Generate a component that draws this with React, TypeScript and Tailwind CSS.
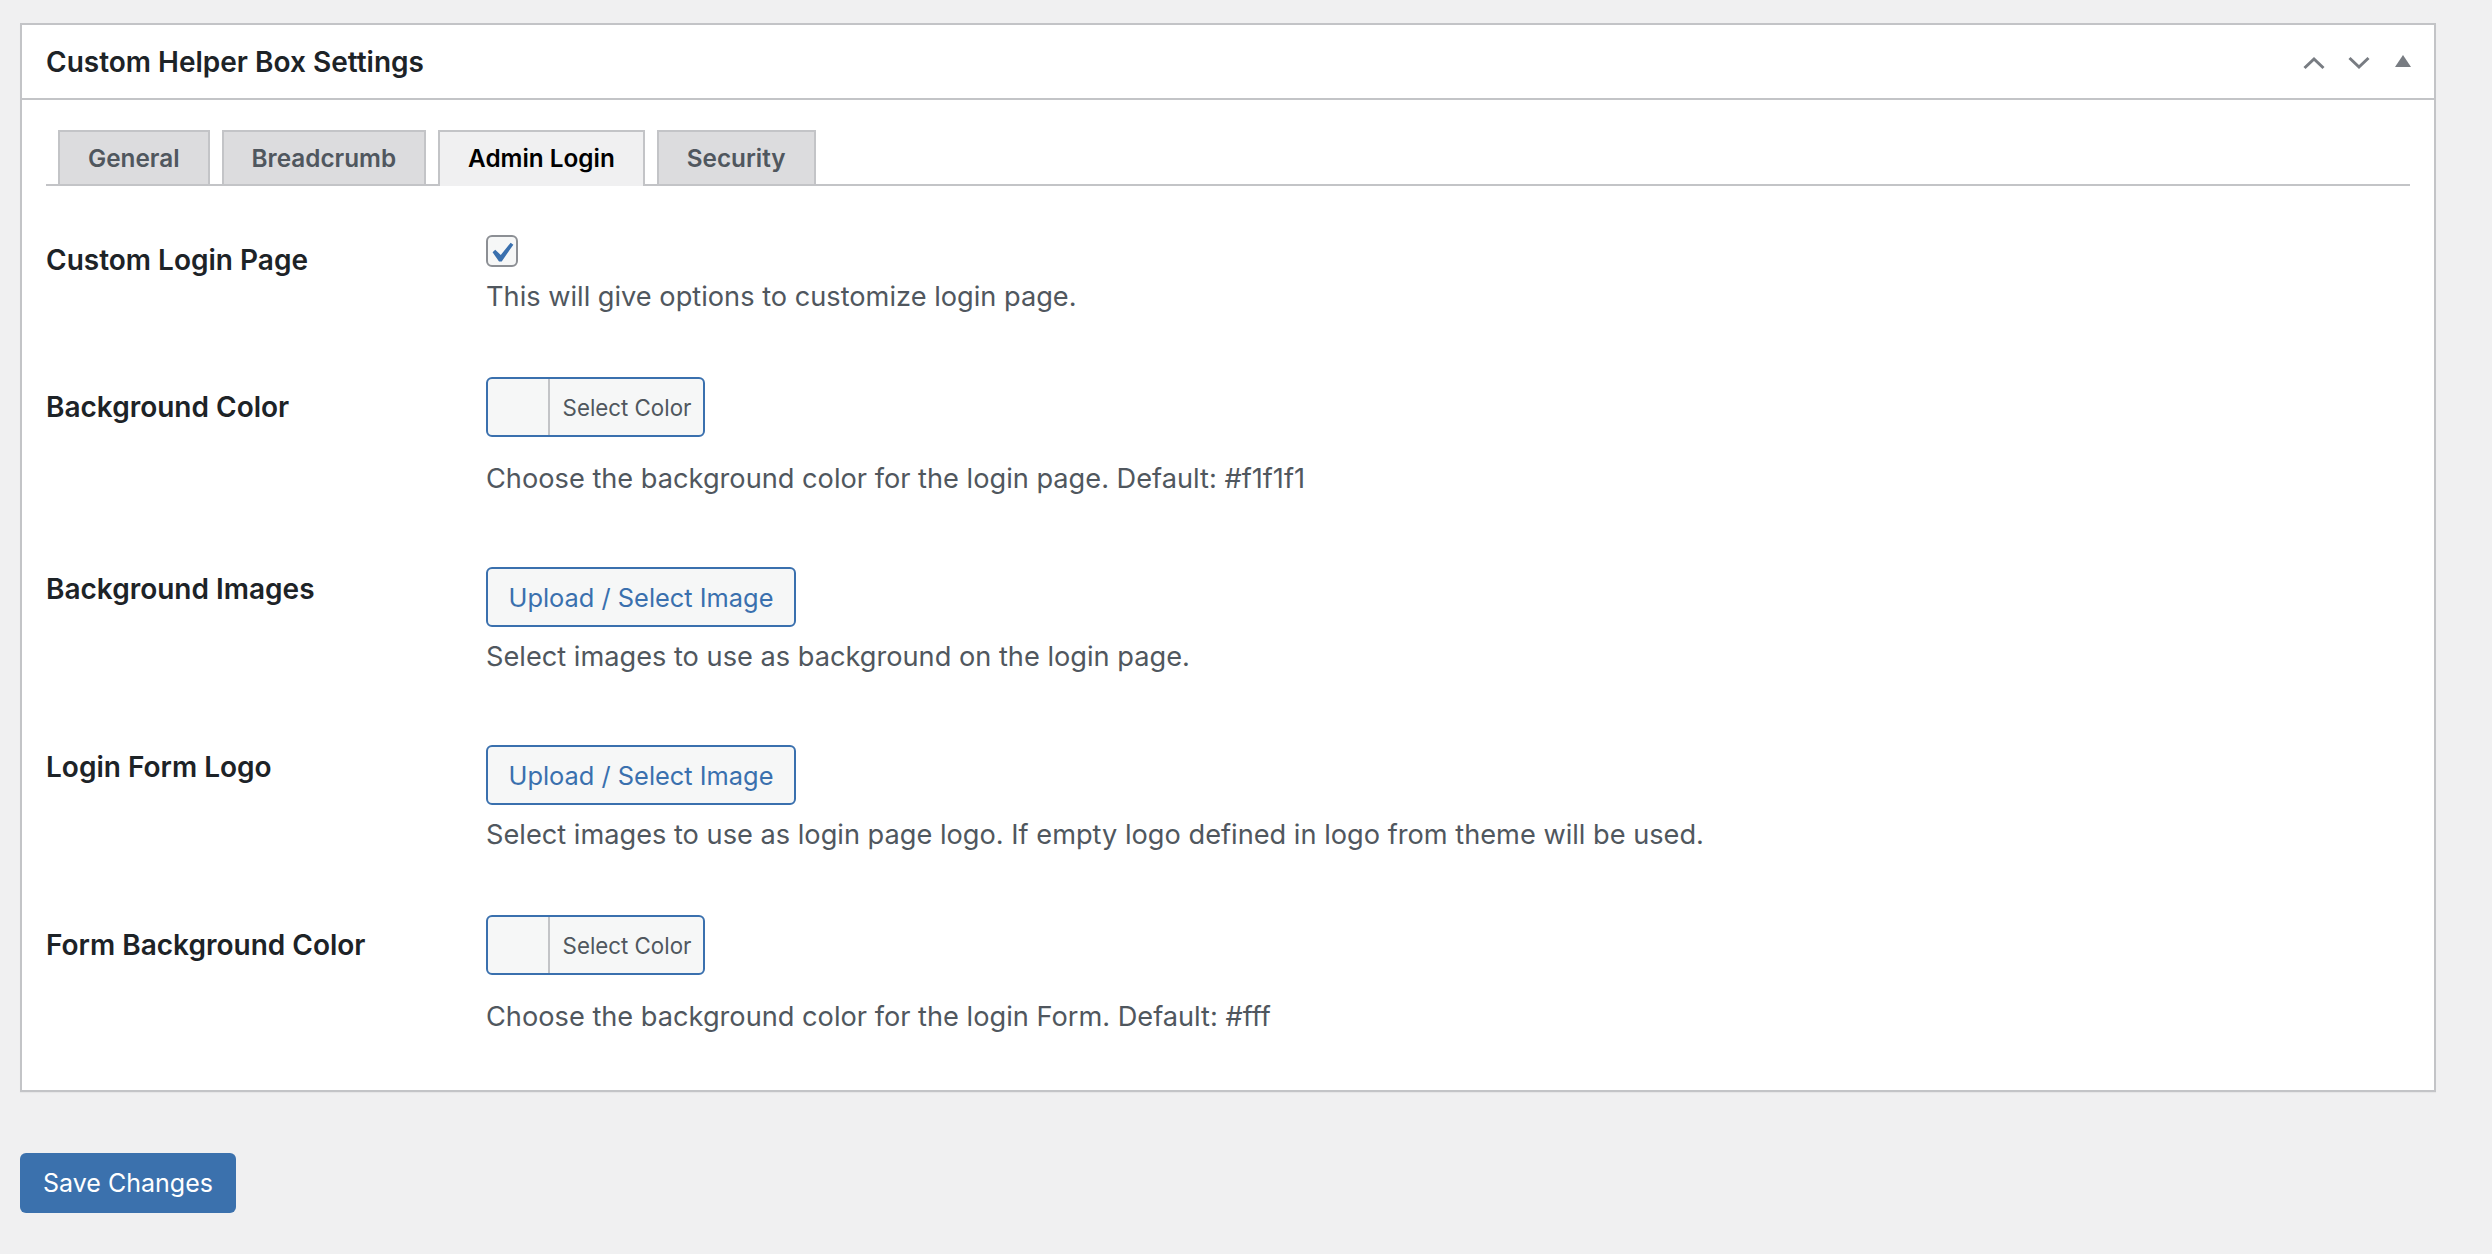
const TABS = ["General", "Breadcrumb", "Admin Login", "Security"];

function ColorButton() {
  return (
    <div className="flex h-[60px] w-[219px] overflow-hidden rounded-[6px] border-2 border-[#3a70ae] bg-[#f6f7f7]">
      <div className="w-[62px] border-r-2 border-[#c3c4c7]" />
      <div className="flex flex-1 items-center justify-center pt-[1px] pl-[1px] text-[22.300px] text-[#50575e]">Select Color</div>
    </div>
  );
}

function UploadButton() {
  return (
    <div className="flex h-[60px] w-[310px] items-center justify-center rounded-[6px] border-2 border-[#3a70ae] bg-[#f6f7f7] pt-[2px] text-[25.400px] text-[#3a70ae]">
      Upload / Select Image
    </div>
  );
}

function Row({ label, labelClass, className, children }: { label: string; labelClass: string; className: string; children: React.ReactNode }) {
  return (
    <div className={`flex items-start ${className}`}>
      <div className={`w-[440px] shrink-0 text-[28px] leading-[36px] font-semibold text-[#1d2327] ${labelClass}`}>{label}</div>
      <div className="flex-1">{children}</div>
    </div>
  );
}

function Desc({ className, children }: { className?: string; children: React.ReactNode }) {
  return <p className={`text-[27.200px] leading-[36px] text-[#50575e] ${className ?? ""}`}>{children}</p>;
}

export default function App() {
  return (
    <div className="h-[1254px] overflow-hidden bg-[#f0f0f1] pt-[23px] pl-[20px] pr-[56px] font-[Inter,sans-serif]">
      <div className="h-[1069px] border-2 border-[#c3c4c7] bg-white shadow-[0_1px_1px_rgba(0,0,0,0.04)]">
        {/* Header */}
        <div className="flex h-[75px] items-center justify-between border-b-2 border-[#c3c4c7] pl-[24px] pr-[23px]">
          <h2 className="text-[28px] font-semibold text-[#1d2327]">Custom Helper Box Settings</h2>
          <div className="flex items-center text-[#787c82]">
            <svg width="22" height="14" viewBox="0 0 22 14" fill="none" stroke="currentColor" strokeWidth="3" className="mt-[2px]">
              <path d="M1.5 12 L11 3 L20.500 12" />
            </svg>
            <svg width="22" height="14" viewBox="0 0 22 14" fill="none" stroke="currentColor" strokeWidth="3" className="ml-[23px] mt-[2px]">
              <path d="M1.500 2 L11 11 L20.500 2" />
            </svg>
            <svg width="16" height="12" viewBox="0 0 16 12" fill="currentColor" className="ml-[25px] mb-[2px]">
              <path d="M8 0 L16 12 L0 12 Z" />
            </svg>
          </div>
        </div>

        <div className="px-[24px]">
          {/* Tabs */}
          <div className="mt-[30px] flex h-[56px] gap-[12px] border-b-2 border-[#c3c4c7] pl-[12px]">
            {TABS.map((tab) =>
              tab === "Admin Login" ? (
                <div key={tab} className="relative z-10 flex h-[56px] items-center border-2 border-b-0 border-[#c3c4c7] bg-[#f0f0f1] px-[28px] pb-[2px] text-[24.300px] font-semibold text-black">
                  {tab}
                </div>
              ) : (
                <div key={tab} className="flex h-[54px] items-center border-2 border-b-0 border-[#c3c4c7] bg-[#dcdcde] px-[28px] text-[24.300px] font-semibold text-[#50575e]">
                  {tab}
                </div>
              )
            )}
          </div>

          <Row label="Custom Login Page" labelClass="mt-[7px]" className="mt-[49px]">
            <div className="relative h-[32px] w-[32px] rounded-[6px] border-2 border-[#8c8f94] bg-[#f6f7f7]">
              <svg width="40" height="40" viewBox="0 0 20 20" fill="#3a70ae" className="absolute -left-[7px] -top-[4px]">
                <path d="M14.830 4.890l1.340.940-5.810 8.380H9.020L5.780 9.670l1.340-1.250 2.770 2.580z" />
              </svg>
            </div>
            <Desc className="mt-[12px] text-[#2c3338]">This will give options to customize login page.</Desc>
          </Row>

          <Row label="Background Color" labelClass="mt-[12px]" className="mt-[62px]">
            <ColorButton />
            <Desc className="mt-[24px]">Choose the background color for the login page. Default: #f1f1f1</Desc>
          </Row>

          <Row label="Background Images" labelClass="mt-[4px]" className="mt-[70px]">
            <UploadButton />
            <Desc className="mt-[12px]">Select images to use as background on the login page.</Desc>
          </Row>

          <Row label="Login Form Logo" labelClass="mt-[4px]" className="mt-[70px]">
            <UploadButton />
            <Desc className="mt-[12px]">Select images to use as login page logo. If empty logo defined in logo from theme will be used.</Desc>
          </Row>

          <Row label="Form Background Color" labelClass="mt-[12px]" className="mt-[62px]">
            <ColorButton />
            <Desc className="mt-[24px]">Choose the background color for the login Form. Default: #fff</Desc>
          </Row>
        </div>
      </div>

      <button className="mt-[61px] flex h-[60px] w-[216px] items-center justify-center rounded-[6px] bg-[#3b71ad] pt-[2px] text-[25px] text-white">
        Save Changes
      </button>
    </div>
  );
}
